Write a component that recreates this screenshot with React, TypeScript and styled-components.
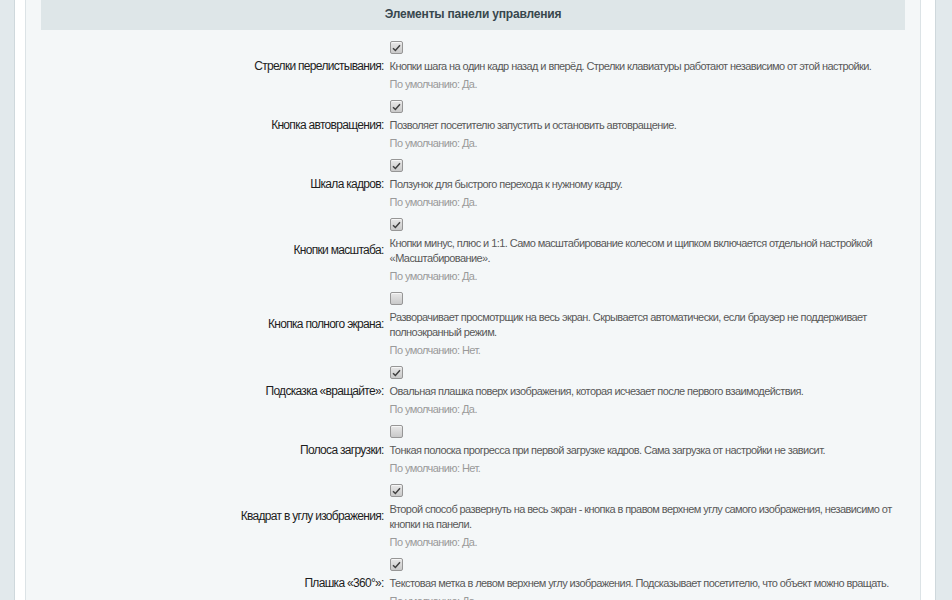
import React from "react";
import styled, { createGlobalStyle } from "styled-components";

const Global = createGlobalStyle`
  html, body { margin: 0; padding: 0; background: #ffffff; }
  body { font-family: Arial, "Liberation Sans", Helvetica, sans-serif; }
`;

const Page = styled.div`
  display: flex;
  min-height: 600px;
  background: #ffffff;
`;

const SideStrip = styled.div<{ $side: "left" | "right" }>`
  flex: none;
  width: ${(p) => (p.$side === "left" ? 14 : 16)}px;
  background: #e2e9ec;
  ${(p) => (p.$side === "left" ? "border-right" : "border-left")}: 1px solid #cfd8dc;
`;

const Gutter = styled.div<{ $w: number }>`
  flex: none;
  width: ${(p) => p.$w}px;
  background: #ffffff;
`;

const Panel = styled.div`
  flex: 1;
  min-width: 0;
  background: #f4f7f8;
  border-left: 1px solid #dce3e6;
  border-right: 1px solid #dce3e6;
  padding: 0 15px;
`;

const SectionHeader = styled.div`
  height: 30px;
  line-height: 29px;
  background: #dee6e8;
  text-align: center;
  font-size: 12px;
  font-weight: bold;
  letter-spacing: -0.2px;
  color: #38474d;
`;

const Rows = styled.div`
  display: grid;
  grid-template-columns: 40% 1fr;
  padding-top: 6px;
`;

const Label = styled.div`
  display: flex;
  align-items: center;
  justify-content: flex-end;
  padding-right: 3px;
  font-size: 12px;
  letter-spacing: -0.7px;
  color: #1e1e1e;
  text-align: right;
`;

const Value = styled.div`
  padding: 5px 4px 3px 3px;
`;

const Box = styled.span<{ $checked: boolean }>`
  display: flex;
  align-items: center;
  justify-content: center;
  box-sizing: border-box;
  width: 13px;
  height: 13px;
  margin-bottom: 5px;
  border: 1px solid #969696;
  border-radius: 2px;
  background: linear-gradient(#e8e8e8, #c9c9c9);
  box-shadow: inset 0 1px 0 #f6f6f6;
`;

const Desc = styled.div`
  font-size: 11px;
  line-height: 15px;
  letter-spacing: -0.58px;
  color: #595959;
`;

const Default = styled.div`
  margin-top: 3px;
  font-size: 11px;
  line-height: 15px;
  letter-spacing: -0.58px;
  color: #9a9a9a;
`;

const Check = () => (
  <svg width="9" height="8" viewBox="0 0 9 8">
    <path d="M1 4.2 L3.4 6.5 L8 1.3" fill="none" stroke="#3f3f3f" strokeWidth="1.5" />
  </svg>
);

type Item = { label: string; checked: boolean; desc: string; def: string };

const items: Item[] = [
  {
    label: "Стрелки перелистывания:",
    checked: true,
    desc: "Кнопки шага на один кадр назад и вперёд. Стрелки клавиатуры работают независимо от этой настройки.",
    def: "По умолчанию: Да.",
  },
  {
    label: "Кнопка автовращения:",
    checked: true,
    desc: "Позволяет посетителю запустить и остановить автовращение.",
    def: "По умолчанию: Да.",
  },
  {
    label: "Шкала кадров:",
    checked: true,
    desc: "Ползунок для быстрого перехода к нужному кадру.",
    def: "По умолчанию: Да.",
  },
  {
    label: "Кнопки масштаба:",
    checked: true,
    desc: "Кнопки минус, плюс и 1:1. Само масштабирование колесом и щипком включается отдельной настройкой «Масштабирование».",
    def: "По умолчанию: Да.",
  },
  {
    label: "Кнопка полного экрана:",
    checked: false,
    desc: "Разворачивает просмотрщик на весь экран. Скрывается автоматически, если браузер не поддерживает полноэкранный режим.",
    def: "По умолчанию: Нет.",
  },
  {
    label: "Подсказка «вращайте»:",
    checked: true,
    desc: "Овальная плашка поверх изображения, которая исчезает после первого взаимодействия.",
    def: "По умолчанию: Да.",
  },
  {
    label: "Полоса загрузки:",
    checked: false,
    desc: "Тонкая полоска прогресса при первой загрузке кадров. Сама загрузка от настройки не зависит.",
    def: "По умолчанию: Нет.",
  },
  {
    label: "Квадрат в углу изображения:",
    checked: true,
    desc: "Второй способ развернуть на весь экран - кнопка в правом верхнем углу самого изображения, независимо от кнопки на панели.",
    def: "По умолчанию: Да.",
  },
  {
    label: "Плашка «360°»:",
    checked: true,
    desc: "Текстовая метка в левом верхнем углу изображения. Подсказывает посетителю, что объект можно вращать.",
    def: "По умолчанию: Да.",
  },
];

export default function App() {
  return (
    <>
      <Global />
      <Page>
        <SideStrip $side="left" />
        <Gutter $w={10} />
        <Panel>
          <SectionHeader>Элементы панели управления</SectionHeader>
          <Rows>
            {items.map((it) => (
              <React.Fragment key={it.label}>
                <Label>{it.label}</Label>
                <Value>
                  <Box $checked={it.checked}>{it.checked && <Check />}</Box>
                  <Desc>{it.desc}</Desc>
                  <Default>{it.def}</Default>
                </Value>
              </React.Fragment>
            ))}
          </Rows>
        </Panel>
        <Gutter $w={14} />
        <SideStrip $side="right" />
      </Page>
    </>
  );
}
